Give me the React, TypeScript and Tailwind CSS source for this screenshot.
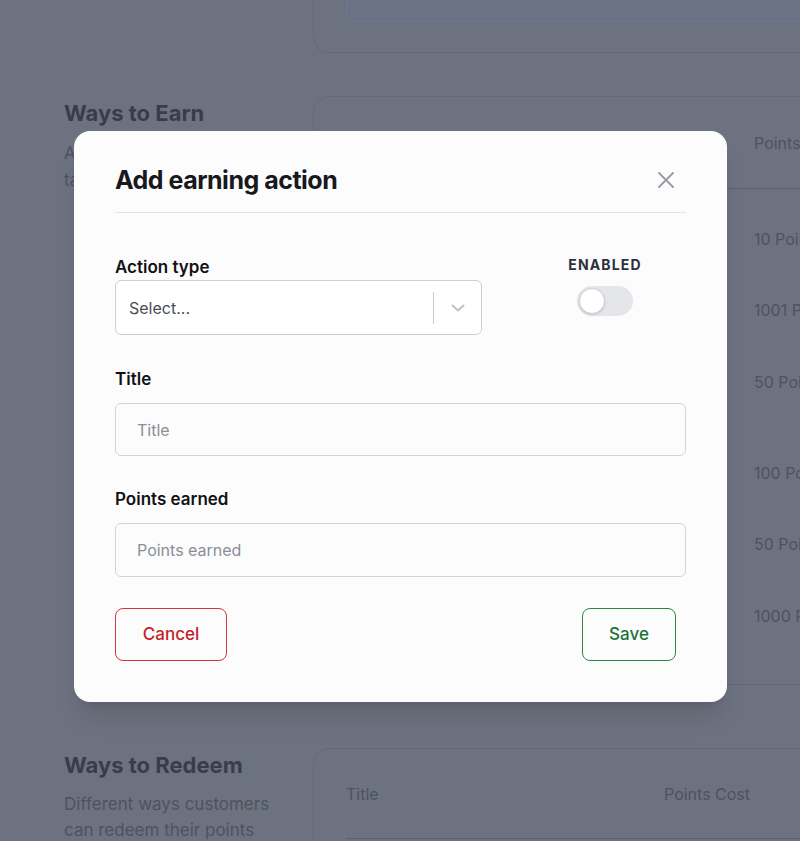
import React from "react";

const font = { fontFamily: 'Inter, "Noto Sans", "Liberation Sans", sans-serif' };

function Background() {
  const rows: { pts: string; h: string }[] = [
    { pts: "10 Points", h: "h-[71px]" },
    { pts: "1001 Points", h: "h-[72px]" },
    { pts: "50 Points", h: "h-[91px]" },
    { pts: "100 Points", h: "h-[71px]" },
    { pts: "50 Points", h: "h-[72px]" },
    { pts: "1000 Points", h: "h-[69px]" },
  ];
  return (
    <div className="flex flex-col w-[1000px]">
      {/* top section */}
      <div className="flex pl-[313px]">
        <div className="w-[640px] shrink-0 h-[53px] rounded-b-2xl border-x border-b border-[#656a77] pl-8 pr-8">
          <div className="h-[22px] rounded-b-lg border-x border-b border-[#67789a] bg-[#6c7383]" />
        </div>
      </div>
      {/* Ways to Earn */}
      <div className="flex pl-16 mt-[43px]">
        <div className="w-[217px] shrink-0 mr-8 pt-[3px]">
          <h2 className="text-[22px] leading-[28px] font-bold text-[#393d49]">Ways to Earn</h2>
          <p className="mt-[13px] text-[17px] leading-[27px] text-[#4e525e]">
            Actions customers can take to earn points
          </p>
        </div>
        <div className="w-[640px] shrink-0 h-[589px] rounded-2xl border border-[#656a77] flex flex-col">
          <div className="h-[92px] border-b border-[#5c6170] flex items-center pl-[440px] text-[16px] text-[#4e525e]">
            Points
          </div>
          {rows.map((r, i) => (
            <div key={i} className={`${r.h} pl-[440px] pt-[38px] text-[16px] leading-[24px] text-[#4e525e] whitespace-nowrap`}>
              {r.pts}
            </div>
          ))}
        </div>
      </div>
      {/* Ways to Redeem */}
      <div className="flex pl-16 mt-[63px]">
        <div className="w-[217px] shrink-0 mr-8 pt-[3px]">
          <h2 className="text-[22px] leading-[28px] font-bold text-[#393d49]">Ways to Redeem</h2>
          <p className="mt-[12px] text-[17px] leading-[26px] text-[#4e525e]">
            Different ways customers can redeem their points
          </p>
        </div>
        <div className="w-[640px] shrink-0 h-[200px] rounded-2xl border border-[#656a77]">
          <div className="ml-8 h-[90px] border-b border-[#5c6170] flex items-center text-[16px] text-[#4e525e]">
            <span className="w-[318px]">Title</span>
            <span>Points Cost</span>
          </div>
        </div>
      </div>
    </div>
  );
}

function Modal() {
  return (
    <div className="absolute left-[74px] top-[131px] w-[653px] rounded-2xl bg-[#fcfcfd] px-[41px] pt-[33px] pb-[41px] shadow-xl">
      <div className="flex items-center justify-between pb-[16px] border-b border-[#e3e4e8]">
        <h3 className="text-[25px] leading-[32px] font-bold tracking-[-0.02em] text-[#18191d]">
          Add earning action
        </h3>
        <button className="mr-[10px] text-[#9a9ea8]">
          <svg width="20" height="20" viewBox="0 0 20 20" fill="none" stroke="currentColor" strokeWidth="2" strokeLinecap="round">
            <path d="M3 3 L17 17 M17 3 L3 17" />
          </svg>
        </button>
      </div>

      <div className="flex items-start mt-[42px]">
        <div className="w-[367px]">
          <label className="block text-[17px] leading-[24px] font-semibold text-[#111214]">Action type</label>
          <div className="mt-[1px] h-[55px] rounded-md border border-[#cfcfcf] bg-white flex items-center">
            <span className="flex-1 pl-[13px] text-[16px] text-[#4a4d55]">Select...</span>
            <span className="w-px h-[32px] bg-[#cccccc]" />
            <span className="w-[47px] flex justify-center text-[#c2c2c2]">
              <svg width="18" height="18" viewBox="0 0 18 18" fill="none" stroke="currentColor" strokeWidth="2" strokeLinecap="round" strokeLinejoin="round">
                <path d="M3.5 6.5 L9 11.5 L14.5 6.5" />
              </svg>
            </span>
          </div>
        </div>
        <div className="ml-auto mr-[31px] w-[100px] flex flex-col items-center">
          <span className="text-[14px] leading-[20px] font-bold tracking-[0.08em] text-[#2b303b]">ENABLED</span>
          <div className="mt-[11px] w-[56px] h-[30px] rounded-full bg-[#e4e6ea] p-[2px] flex items-center">
            <div className="w-[26px] h-[26px] rounded-full bg-white border border-[#cdd0d6] shadow-sm" />
          </div>
        </div>
      </div>

      <label className="block mt-[32px] text-[17px] leading-[24px] font-semibold text-[#111214]">Title</label>
      <input
        placeholder="Title"
        className="mt-[12px] w-full h-[53px] rounded-md border border-[#d3d5da] bg-[#fcfcfd] px-[21px] text-[16px] placeholder:text-[#8a8e98] outline-none"
        style={font}
      />

      <label className="block mt-[31px] text-[17px] leading-[24px] font-semibold text-[#111214]">Points earned</label>
      <input
        placeholder="Points earned"
        className="mt-[12px] w-full h-[54px] rounded-md border border-[#d3d5da] bg-[#fcfcfd] px-[21px] text-[16px] placeholder:text-[#8a8e98] outline-none"
        style={font}
      />

      <div className="flex justify-between mt-[31px] pr-[10px]">
        <button className="w-[112px] h-[53px] rounded-lg border border-[#d9353d] text-[17px] font-medium text-[#c4222a]" style={font}>
          Cancel
        </button>
        <button className="w-[94px] h-[53px] rounded-lg border border-[#2a8747] text-[17px] font-medium text-[#1d7337]" style={font}>
          Save
        </button>
      </div>
    </div>
  );
}

export default function App() {
  return (
    <div className="relative w-full h-[841px] overflow-hidden bg-[#6d7280]" style={font}>
      <Background />
      <Modal />
    </div>
  );
}
